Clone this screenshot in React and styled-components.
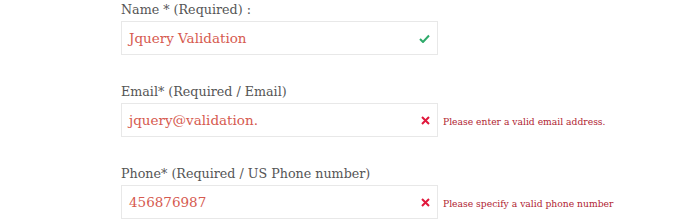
import React from 'react';
import styled, { createGlobalStyle } from 'styled-components';

const Global = createGlobalStyle`
  body {
    margin: 0;
    background: #fff;
    font-family: "DejaVu Serif", "Liberation Serif", serif;
  }
`

const Form = styled.div`
  padding: 0 0 0 121px;
  width: 688px;
  box-sizing: border-box;
`

const Field = styled.div`
  margin-bottom: 27px;
  &:last-child {
    margin-bottom: 0;
  }
`

const Label = styled.div`
  color: #555;
  font-size: 12.7px;
  line-height: 20px;
  height: 21px;
`

const Row = styled.div`
  display: flex;
  align-items: center;
`

const Box = styled.div`
  width: 317px;
  height: 34px;
  box-sizing: border-box;
  border: 1px solid #e8e8e8;
  display: flex;
  align-items: center;
  justify-content: space-between;
  padding: 0 7px 0 7px;
`

const Value = styled.span`
  color: #d65a4f;
  font-size: 13.5px;
`

const Error = styled.span`
  color: #b02432;
  font-size: 9.2px;
  margin-left: 5px;
  padding-top: 2px;
`

const Check = () => (
  <svg width="11" height="9" viewBox="0 0 11 9">
    <path d="M1 5 L4 8 L10 1.5" fill="none" stroke="#2eaa6a" strokeWidth="2" />
  </svg>
)

const Cross = () => (
  <svg width="9" height="9" viewBox="0 0 9 9">
    <path d="M1 1 L8 8 M8 1 L1 8" fill="none" stroke="#e0183c" strokeWidth="2" />
  </svg>
)

const fields = [
  { label: 'Name * (Required) :', value: 'Jquery Validation', ok: true },
  { label: 'Email* (Required / Email)', value: 'jquery@validation.', error: 'Please enter a valid email address.' },
  { label: 'Phone* (Required / US Phone number)', value: '456876987', error: 'Please specify a valid phone number' },
]

export default function App() {
  return (
    <>
      <Global />
      <Form>
        {fields.map((f) => (
          <Field key={f.label}>
            <Label>{f.label}</Label>
            <Row>
              <Box>
                <Value>{f.value}</Value>
                {f.ok ? <Check /> : <Cross />}
              </Box>
              {f.error && <Error>{f.error}</Error>}
            </Row>
          </Field>
        ))}
      </Form>
    </>
  )
}
